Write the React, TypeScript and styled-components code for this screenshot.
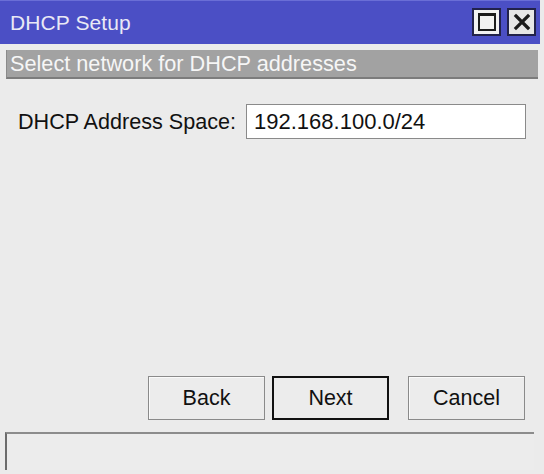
import React from "react";
import styled, { createGlobalStyle } from "styled-components";

const Global = createGlobalStyle`
  html, body { margin: 0; padding: 0; background: #ececec; }
  body { font-family: "Liberation Sans", Arial, sans-serif; }
`;

const Window = styled.div`
  width: 544px;
  height: 474px;
  display: flex;
  flex-direction: column;
  background: #ebebeb;
  box-sizing: border-box;
  overflow: hidden;
`;

const TitleBar = styled.div`
  height: 44px;
  margin-right: 4px;
  background: #4b4fc5;
  border-top: 1px solid #6a6ed6;
  box-sizing: border-box;
  display: flex;
  align-items: center;
  padding: 0 4px 0 10px;
`;

const Title = styled.div`
  color: #e9e9f5;
  font-size: 21px;
  letter-spacing: 0.1px;
  margin-top: 1px;
`;

const TitleButtons = styled.div`
  margin-left: auto;
  display: flex;
  gap: 6px;
  margin-top: -1px;
`;

const TitleButton = styled.div`
  width: 29px;
  height: 28px;
  box-sizing: border-box;
  border: 2px solid #22224a;
  background: ${(p: { $light?: boolean }) => (p.$light ? "#f2f2f2" : "#e6e6e6")};
  display: flex;
  align-items: center;
  justify-content: center;
`;

const MaxIcon = styled.div`
  width: 18px;
  height: 18px;
  box-sizing: border-box;
  border: 2px solid #1c1c1c;
  border-top-width: 3px;
`;

const Content = styled.div`
  flex: 1;
  display: flex;
  flex-direction: column;
  padding: 6px 6px 0 6px;
`;

const SectionHeader = styled.div`
  height: 29px;
  box-sizing: border-box;
  background: #a2a2a2;
  border-left: 1px solid #8a8a8a;
  border-bottom: 2px solid #7c7c7c;
  color: #f6f6f6;
  font-size: 21.7px;
  line-height: 28px;
  padding-left: 3px;
  white-space: nowrap;
`;

const FormRow = styled.div`
  margin-top: 25px;
  display: flex;
  align-items: center;
  padding-left: 12px;
  gap: 10px;
`;

const Label = styled.label`
  font-size: 21.6px;
  color: #111;
`;

const Input = styled.input`
  width: 280px;
  height: 35px;
  box-sizing: border-box;
  border: 1px solid #8a8a8a;
  background: #fff;
  font-family: "Liberation Sans", Arial, sans-serif;
  font-size: 22px;
  color: #111;
  padding: 0 7px;
  outline: none;
`;

const Spacer = styled.div`
  flex: 1;
`;

const ButtonRow = styled.div`
  display: flex;
  justify-content: flex-end;
  padding-right: 13px;
  gap: 7px;
  margin-bottom: 12px;
`;

const Button = styled.button<{ $default?: boolean; $gapBefore?: number }>`
  width: 117px;
  height: 44px;
  box-sizing: border-box;
  background: #ececec;
  border: ${(p) => (p.$default ? "2px solid #111" : "1px solid #8a8a8a")};
  box-shadow: ${(p) => (p.$default ? "none" : "inset 1px 1px 0 #fafafa")};
  font-family: "Liberation Sans", Arial, sans-serif;
  font-size: 21.5px;
  color: #111;
  margin-left: ${(p) => p.$gapBefore ?? 0}px;
  padding: 0;
`;

const StatusBar = styled.div`
  height: 38px;
  margin: 0 4px 4px -1px;
  box-sizing: border-box;
  border-top: 2px solid #8c8c8c;
  border-left: 2px solid #6c6c6c;
  background: #ececec;
`;

export default function App() {
  return (
    <>
      <Global />
      <Window>
        <TitleBar>
          <Title>DHCP Setup</Title>
          <TitleButtons>
            <TitleButton $light>
              <MaxIcon />
            </TitleButton>
            <TitleButton>
              <svg width="18" height="18" viewBox="0 0 18 18">
                <path d="M3 3 L15 15 M15 3 L3 15" stroke="#1a1a1a" strokeWidth="3.2" strokeLinecap="square" />
              </svg>
            </TitleButton>
          </TitleButtons>
        </TitleBar>
        <Content>
          <SectionHeader>Select network for DHCP addresses</SectionHeader>
          <FormRow>
            <Label>DHCP Address Space:</Label>
            <Input defaultValue="192.168.100.0/24" readOnly />
          </FormRow>
          <Spacer />
          <ButtonRow>
            <Button>Back</Button>
            <Button $default>Next</Button>
            <Button $gapBefore={12}>Cancel</Button>
          </ButtonRow>
          <StatusBar />
        </Content>
      </Window>
    </>
  );
}
